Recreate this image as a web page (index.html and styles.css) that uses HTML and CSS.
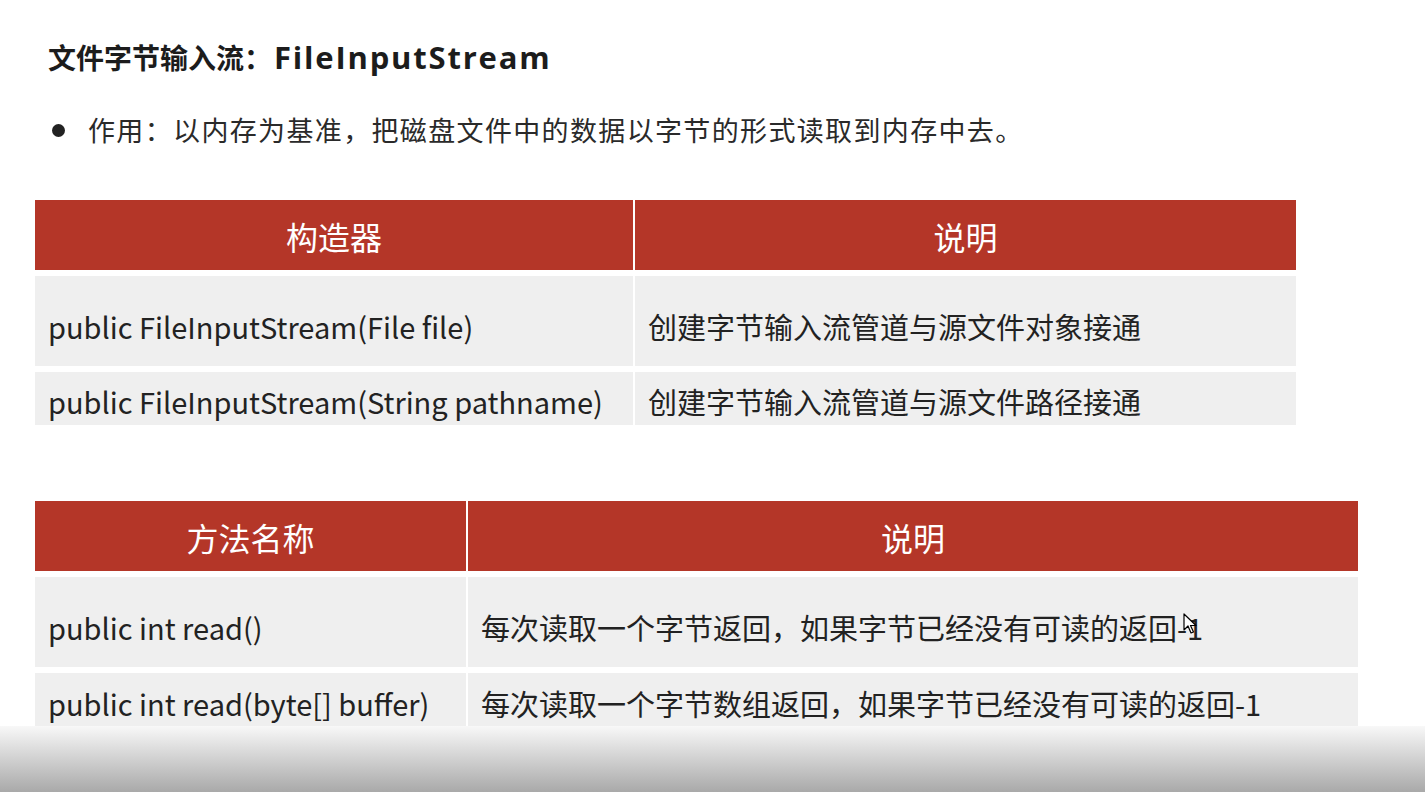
FILE: index.html
```html
<!DOCTYPE html>
<html lang="zh-CN">
<head>
<meta charset="utf-8">
<title>FileInputStream</title>
<link rel="stylesheet" href="styles.css">
</head>
<body>
<main class="slide">
  <h1 class="title">文件字节输入流：<span class="title-en">FileInputStream</span></h1>
  <p class="bullet"><span class="dot"></span>作用：以内存为基准，把磁盘文件中的数据以字节的形式读取到内存中去。</p>

  <div class="table t1">
    <div class="head">构造器</div>
    <div class="head">说明</div>
    <div class="cell tall">public FileInputStream(File file)</div>
    <div class="cell tall">创建字节输入流管道与源文件对象接通</div>
    <div class="cell short">public FileInputStream(String pathname)</div>
    <div class="cell short">创建字节输入流管道与源文件路径接通</div>
  </div>

  <div class="table t2">
    <div class="head">方法名称</div>
    <div class="head">说明</div>
    <div class="cell tall">public int read()</div>
    <div class="cell tall">每次读取一个字节返回，如果字节已经没有可读的返回-1</div>
    <div class="cell short">public int read(byte[] buffer)</div>
    <div class="cell short">每次读取一个字节数组返回，如果字节已经没有可读的返回-1</div>
  </div>
</main>
<svg class="cursor" width="14" height="22" viewBox="0 0 14 22"><path d="M1 1 L1 17 L5 13 L8 20 L10.5 19 L7.5 12.5 L13 12.5 Z" fill="#fff" stroke="#000" stroke-width="1.2" stroke-linejoin="round"/></svg>
<div class="shade"></div>
</body>
</html>
```
FILE: styles.css
```css
html, body {
  margin: 0;
  padding: 0;
  background: #fff;
}
body {
  width: 1425px;
  height: 792px;
  overflow: hidden;
  position: relative;
  font-family: "Noto Sans CJK SC", "Noto Sans", sans-serif;
  color: #262626;
}
.slide {
  padding: 37px 0 0 35px;
}
.title {
  margin: 0 0 0 13px;
  font-size: 28px;
  line-height: 40px;
  font-weight: 700;
  color: #1c1c1c;
}
.title-en {
  font-family: "Open Sans", "Noto Sans CJK SC", sans-serif;
  font-weight: 700;
  font-size: 31px;
  letter-spacing: 1.8px;
  margin-left: 2px;
}
.bullet {
  margin: 33px 0 0 0;
  font-size: 27px;
  line-height: 40px;
  letter-spacing: 1.35px;
  display: flex;
  align-items: center;
  color: #2a2a2a;
}
.dot {
  width: 13px;
  height: 13px;
  border-radius: 50%;
  background: #222;
  margin: 0 23px 0 17px;
  flex: none;
}
.table {
  display: grid;
  column-gap: 2px;
  background: #fff;
}
.t1 {
  margin-top: 50px;
  width: 1261px;
  grid-template-columns: 598px 1fr;
  grid-template-rows: 70px 90px 53px;
  row-gap: 6px;
}
.t2 {
  margin-top: 76px;
  width: 1323px;
  grid-template-columns: 431px 1fr;
  grid-template-rows: 70px 90px 56px;
  row-gap: 6px;
}
.head {
  background: #b43628;
  color: #fff;
  font-size: 32px;
  display: flex;
  align-items: center;
  justify-content: center;
  padding-top: 2px;
}
.cell {
  background: #efefef;
  font-size: 29px;
  display: flex;
  align-items: center;
  padding-left: 13px;
  color: #222;
  white-space: nowrap;
}
.cell.tall { padding-top: 10px; }
.cell.short { padding-top: 4px; }
.cursor {
  position: absolute;
  left: 1183px;
  top: 613px;
}
.shade {
  position: absolute;
  left: 0;
  right: 0;
  bottom: 0;
  height: 66px;
  background: linear-gradient(#f8f8f8, #a9a9a9);
}
```
